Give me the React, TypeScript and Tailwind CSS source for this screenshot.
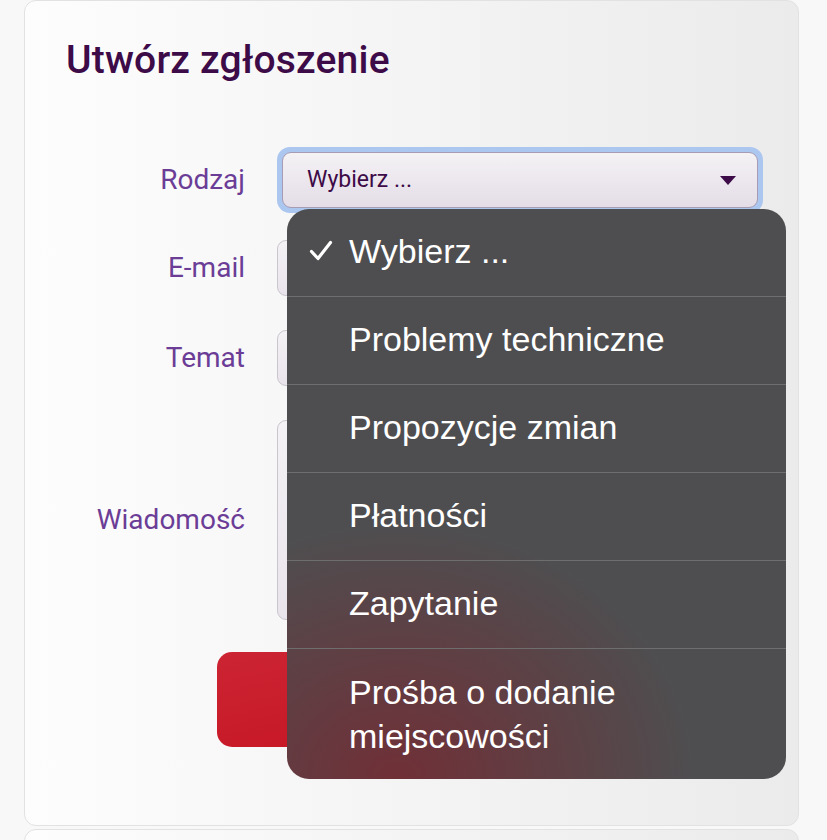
import React from "react";

const OPTIONS = [
  "Wybierz ...",
  "Problemy techniczne",
  "Propozycje zmian",
  "Płatności",
  "Zapytanie",
  "Prośba o dodanie miejscowości",
];

function Label({ children }: { children: React.ReactNode }) {
  return (
    <div className="w-[220px] shrink-0 text-right text-[28px] leading-none text-[#6b3d96] font-['Roboto',sans-serif]">
      {children}
    </div>
  );
}

function Check() {
  return (
    <svg width="24" height="22" viewBox="0 0 24 22" className="shrink-0">
      <path
        d="M2.5 11.5 L9 18.5 L21.5 2.5"
        fill="none"
        stroke="white"
        strokeWidth="3.2"
        strokeLinecap="round"
        strokeLinejoin="round"
      />
    </svg>
  );
}

function Dropdown() {
  return (
    <div className="absolute left-[262px] top-[208px] w-[499px] rounded-[22px] overflow-hidden bg-[#4e4e50] bg-[radial-gradient(ellipse_60%_45%_at_22%_100%,rgba(116,44,52,0.9),rgba(78,78,80,0)_100%)] font-['Liberation_Sans',Arial,sans-serif] text-white">
      {OPTIONS.map((o, i) => (
        <div
          key={o}
          className={
            "flex items-start text-[34px] leading-[44px] " +
            (i > 0 ? "border-t border-[#6e6e6e] " : "") +
            (i === OPTIONS.length - 1 ? "pt-[21px] pb-[21px]" : "pt-[20px] pb-[23px]")
          }
        >
          <div className="w-[62px] shrink-0 flex justify-end pr-[16px] pt-[11px]">
            {i === 0 && <Check />}
          </div>
          <span className="pr-[40px]">{o}</span>
        </div>
      ))}
    </div>
  );
}

export default function App() {
  return (
    <div className="w-[827px] h-[840px] overflow-hidden bg-[#f8f8f8] pl-[24px]">
      <div className="relative w-[775px] h-[826px] rounded-[12px] border border-[#e2e2e2] bg-gradient-to-r from-[#fdfdfd] to-[#ebebeb]">
        <h1 className="pt-[37px] pl-[41px] text-[39px] leading-[44px] font-medium tracking-[0.2px] text-[#3d0b47] font-['Roboto',sans-serif]">
          Utwórz zgłoszenie
        </h1>

        {/* Rodzaj */}
        <div className="mt-[65px] flex items-center gap-[32px]">
          <Label>Rodzaj</Label>
          <div className="w-[486px] rounded-[13px] bg-[#abc7ef] p-[5px]">
            <div className="h-[56px] rounded-[9px] border border-[#a89cb5] bg-gradient-to-b from-[#f4f2f5] to-[#e4dde7] flex items-center justify-between pl-[24px] pr-[20px]">
              <span className="text-[23px] text-[#3d0b47] font-['Roboto',sans-serif]">
                Wybierz ...
              </span>
              <svg width="18" height="11" viewBox="0 0 18 11">
                <path d="M1 1 H17 L9 10 Z" fill="#3d0b47" />
              </svg>
            </div>
          </div>
        </div>

        {/* E-mail */}
        <div className="mt-[27px] flex items-center gap-[32px]">
          <Label>E-mail</Label>
          <div className="w-[486px] h-[56px] rounded-[9px] border border-[#cbc5ce] bg-gradient-to-b from-[#f4f2f5] to-[#e9e4eb]" />
        </div>

        {/* Temat */}
        <div className="mt-[34px] flex items-center gap-[32px]">
          <Label>Temat</Label>
          <div className="w-[486px] h-[56px] rounded-[9px] border border-[#cbc5ce] bg-gradient-to-b from-[#f4f2f5] to-[#e9e4eb]" />
        </div>

        {/* Wiadomość */}
        <div className="mt-[34px] flex items-center gap-[32px]">
          <Label>Wiadomość</Label>
          <div className="w-[486px] h-[200px] rounded-[9px] border border-[#cbc5ce] bg-gradient-to-b from-[#f4f2f5] to-[#e9e4eb]" />
        </div>

        <div className="mt-[32px] flex justify-center">
          <button
            aria-label="Wyślij"
            className="w-[390px] h-[95px] rounded-[15px] bg-gradient-to-br from-[#cc2433] to-[#c40d1c]"
          />
        </div>

        <Dropdown />
      </div>
      <div className="mt-[3px] w-[775px] h-[40px] rounded-[12px] border border-[#e2e2e2] bg-gradient-to-r from-[#fdfdfd] to-[#ebebeb]" />
    </div>
  );
}
